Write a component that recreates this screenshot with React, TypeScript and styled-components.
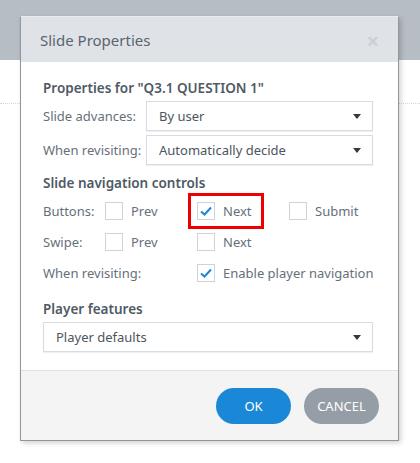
import React from 'react';
import styled, { createGlobalStyle } from 'styled-components';

const GlobalStyle = createGlobalStyle`
    html, body {
        margin: 0;
        padding: 0;
        background: #ffffff;
    }
    body {
        font-family: 'Noto Sans', 'Open Sans', Arial, sans-serif;
        color: #5f6870;
    }
`;

const Page = styled.div`
    position: relative;
    width: 420px;
    height: 463px;
    overflow: hidden;
    background: #ffffff;
`;

const PageHeader = styled.div`
    height: 60px;
    background: #b7bdc4;
`;

const PageContent = styled.div`
    margin-top: 43px;
    border-top: 1px dotted #d4d8dc;
`;

const Dialog = styled.div`
    position: absolute;
    left: 20px;
    top: 16px;
    width: 377px;
    display: flex;
    flex-direction: column;
    background: #ffffff;
    border: 1px solid #8f969c;
    border-top-color: #e8ebee;
    box-shadow: 2px 2px 5px rgba(0, 0, 0, 0.18);
`;

const Header = styled.div`
    height: 45px;
    display: flex;
    align-items: center;
    justify-content: space-between;
    padding: 0 19px 0 19px;
    background: #dfe3e7;
`;

const Title = styled.h1`
    margin: 0;
    font-size: 15px;
    font-weight: 400;
    color: #5b646d;
`;

const Close = styled.span`
    font-size: 22px;
    font-weight: 700;
    line-height: 1;
    color: #cbd0d4;
`;

const Body = styled.div`
    padding: 16px 25px 18px 22px;
`;

const SectionTitle = styled.h2<{ $top?: number }>`
    margin: ${(p) => p.$top ?? 0}px 0 3px;
    font-size: 13.5px;
    font-weight: 600;
    color: #4f5a64;
    line-height: 20px;
`;

const FieldGrid = styled.div`
    display: grid;
    grid-template-columns: 103px 1fr;
    row-gap: 4px;
    align-items: center;
`;

const Label = styled.span`
    font-size: 13px;
    color: #66707a;
    white-space: nowrap;
`;

const Select = styled.div`
    height: 28px;
    display: flex;
    align-items: center;
    justify-content: space-between;
    padding: 0 11px 0 12px;
    border: 1px solid #d6dce1;
    box-shadow: 0 1px 1px rgba(0, 0, 0, 0.06);
    font-size: 13px;
    color: #4d555d;
`;

const Arrow = styled.span`
    width: 0;
    height: 0;
    border-left: 4px solid transparent;
    border-right: 4px solid transparent;
    border-top: 5px solid #333a40;
`;

const NavGrid = styled.div`
    display: grid;
    grid-template-columns: 62px 92px 92px 1fr;
    grid-auto-rows: 31px;
    align-items: center;
    margin-top: -1px;
`;

const Option = styled.label<{ $span?: number }>`
    position: relative;
    display: flex;
    align-items: center;
    gap: 8px;
    font-size: 13px;
    color: #66707a;
    white-space: nowrap;
    grid-column: ${(p) => (p.$span ? `span ${p.$span}` : 'auto')};
`;

const Box = styled.span`
    width: 16px;
    height: 16px;
    border: 1px solid #cdd3d8;
    background: #ffffff;
    display: flex;
    align-items: center;
    justify-content: center;
    flex: none;
`;

const Highlight = styled.span`
    position: absolute;
    left: -9px;
    top: 50%;
    transform: translateY(-50%);
    width: 70px;
    height: 30px;
    border: 3px solid #ee0000;
`;

const WideLabel = styled(Label)`
    grid-column: span 2;
`;

const Footer = styled.div`
    display: flex;
    justify-content: flex-end;
    gap: 13px;
    padding: 17px 19px 16px;
    background: #f4f4f4;
    border-top: 1px solid #dfe2e5;
`;

const Button = styled.button<{ $primary?: boolean }>`
    width: 75px;
    height: 36px;
    border: none;
    border-radius: 18px;
    font-family: inherit;
    font-size: 13px;
    color: #ffffff;
    background: ${(p) => (p.$primary ? '#1a87d7' : '#959ea6')};
`;

const Check = () => (
    <svg width="14" height="12" viewBox="0 0 14 12">
        <path d="M2 6.5 L5.5 9.5 L12 2.5" fill="none" stroke="#1b87d8" strokeWidth="2" />
    </svg>
);

const CheckOption: React.FC<{ label: string; checked?: boolean; highlight?: boolean; span?: number }> = ({
    label,
    checked,
    highlight,
    span,
}) => (
    <Option $span={span}>
        {highlight && <Highlight />}
        <Box>{checked && <Check />}</Box>
        {label}
    </Option>
);

const App: React.FC = () => (
    <Page>
        <GlobalStyle />
        <PageHeader />
        <PageContent />
        <Dialog>
            <Header>
                <Title>Slide Properties</Title>
                <Close>×</Close>
            </Header>
            <Body>
                <SectionTitle>Properties for "Q3.1 QUESTION 1"</SectionTitle>
                <FieldGrid>
                    <Label>Slide advances:</Label>
                    <Select>
                        By user
                        <Arrow />
                    </Select>
                    <Label>When revisiting:</Label>
                    <Select>
                        Automatically decide
                        <Arrow />
                    </Select>
                </FieldGrid>
                <SectionTitle $top={8}>Slide navigation controls</SectionTitle>
                <NavGrid>
                    <Label>Buttons:</Label>
                    <CheckOption label="Prev" />
                    <CheckOption label="Next" checked highlight />
                    <CheckOption label="Submit" />
                    <Label>Swipe:</Label>
                    <CheckOption label="Prev" />
                    <CheckOption label="Next" span={2} />
                    <WideLabel>When revisiting:</WideLabel>
                    <CheckOption label="Enable player navigation" checked span={2} />
                </NavGrid>
                <SectionTitle $top={11}>Player features</SectionTitle>
                <Select>
                    Player defaults
                    <Arrow />
                </Select>
            </Body>
            <Footer>
                <Button $primary>OK</Button>
                <Button>CANCEL</Button>
            </Footer>
        </Dialog>
    </Page>
);

export default App;
